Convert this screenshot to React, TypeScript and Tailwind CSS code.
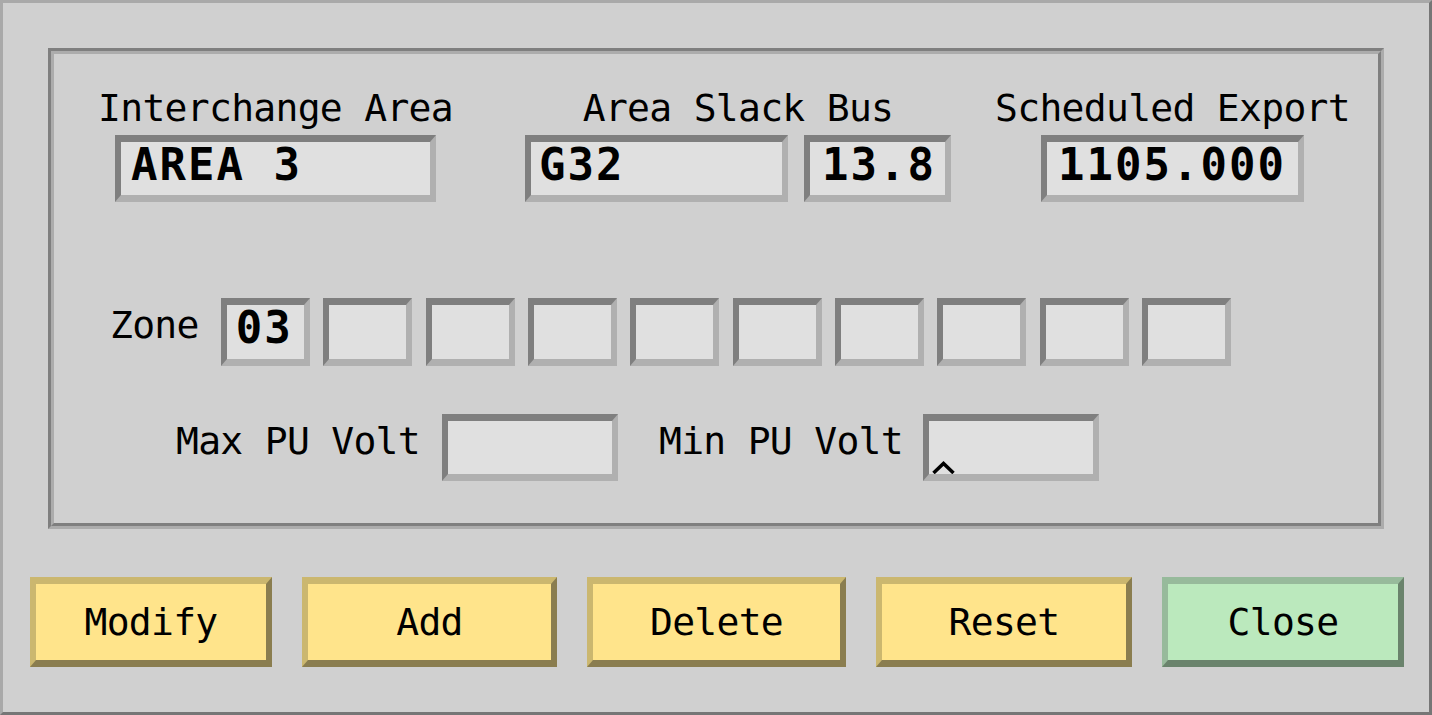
import type { ReactNode } from "react";

const sunken =
  "border-x-[6px] border-y-[7px] border-t-[#7f7f7f] border-l-[#7f7f7f] border-b-[#b0b0b0] border-r-[#b0b0b0] bg-[#e0e0e0]";

const label = "whitespace-nowrap text-[38px] leading-[38px] tracking-[-0.7px]";
const value = "whitespace-nowrap text-[44px] font-bold leading-none tracking-[2px]";

const Field = ({
  className,
  pad = "pl-[10px]",
  children,
}: {
  className: string;
  pad?: string;
  children?: ReactNode;
}) => (
  <div className={`${sunken} ${className}`}>
    <div className={`${value} ${pad} pt-[1px]`}>{children}</div>
  </div>
);

const Button = ({ text, w, green }: { text: string; w: string; green?: boolean }) => (
  <button
    className={`flex h-[90px] ${w} items-center justify-center border-x-[6px] border-y-[7px] ${
      green
        ? "border-t-[#97ba9b] border-l-[#97ba9b] border-b-[#6a836c] border-r-[#6a836c] bg-[#bbe9bd]"
        : "border-t-[#cbb76f] border-l-[#cbb76f] border-b-[#8a7d4f] border-r-[#8a7d4f] bg-[#ffe48b]"
    }`}
  >
    <span className={label}>{text}</span>
  </button>
);

const App = () => {
  return (
    <div className="flex h-[715px] w-[1432px] flex-col border-[3px] border-t-[#a9a9a9] border-l-[#a9a9a9] border-b-[#767676] border-r-[#767676] bg-[#d0d0d0] font-['DejaVu_Sans_Mono',monospace] text-black">
      <div className="mx-[45px] mt-[45px] h-[481px] border-[3px] border-t-[#7f7f7f] border-l-[#7f7f7f] border-b-[#acacac] border-r-[#acacac]">
        <div className="flex h-full flex-col border-[3px] border-t-[#acacac] border-l-[#acacac] border-b-[#7f7f7f] border-r-[#7f7f7f] pt-[35px]">
          <div className="ml-[61px] flex items-start">
            <div className="flex w-[321px] flex-col items-center">
              <span className={label}>Interchange Area</span>
              <Field className="mt-[8px] h-[67px] w-[321px]">AREA 3</Field>
            </div>
            <div className="ml-[89px] flex w-[426px] flex-col items-center">
              <span className={label}>Area Slack Bus</span>
              <div className="mt-[8px] flex gap-[16px]">
                <Field className="h-[67px] w-[263px]" pad="pl-[8px]">
                  G32
                </Field>
                <Field className="h-[67px] w-[147px]" pad="pl-[12px]">
                  13.8
                </Field>
              </div>
            </div>
            <div className="ml-[90px] flex w-[263px] flex-col items-center">
              <span className={label}>Scheduled Export</span>
              <Field className="mt-[8px] h-[67px] w-[263px]" pad="pl-[11px]">
                1105.000
              </Field>
            </div>
          </div>

          <div className="mt-[96px] flex items-start pl-[56px]">
            <span className={`${label} mt-[8px]`}>Zone</span>
            <div className="ml-[22px] flex gap-[13.4px]">
              <Field className="h-[68px] w-[89px]" pad="pl-[9px]">
                03
              </Field>
              {Array.from({ length: 9 }).map((_, i) => (
                <Field key={i} className="h-[68px] w-[89px]" />
              ))}
            </div>
          </div>

          <div className="mt-[48px] flex items-start pl-[122px]">
            <span className={`${label} mt-[8px]`}>Max PU Volt</span>
            <div className={`${sunken} ml-[22px] h-[67px] w-[176px]`} />
            <span className={`${label} ml-[41px] mt-[8px]`}>Min PU Volt</span>
            <div className={`${sunken} relative ml-[20px] h-[67px] w-[176px]`}>
              <svg
                className="absolute bottom-0 left-[3px]"
                width="23"
                height="13"
                viewBox="0 0 23 13"
              >
                <path d="M1.5 12 L11.5 2.5 L21.5 12" fill="none" stroke="#000" strokeWidth="3.5" />
              </svg>
            </div>
          </div>
        </div>
      </div>

      <div className="mt-[48px] flex gap-[30px] pl-[27px]">
        <Button text="Modify" w="w-[242px]" />
        <Button text="Add" w="w-[255px]" />
        <Button text="Delete" w="w-[259px]" />
        <Button text="Reset" w="w-[256px]" />
        <Button text="Close" w="w-[242px]" green />
      </div>
    </div>
  );
};

export default App;
